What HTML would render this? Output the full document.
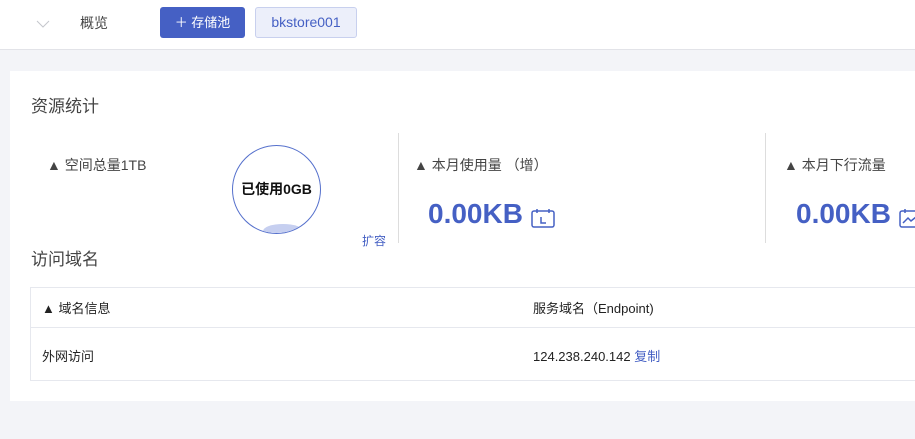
<!DOCTYPE html>
<html><head><meta charset="utf-8"><style>
*{margin:0;padding:0;box-sizing:border-box}
body{width:915px;height:439px;overflow:hidden;background:#f3f4f8;font-family:"Liberation Sans","Noto Sans CJK SC",sans-serif;position:relative;color:#333}
.a{position:absolute;white-space:nowrap}
</style></head><body>
<div class="a" style="left:0;top:0;width:915px;height:50px;background:#fff;border-bottom:1px solid #e2e3e8"></div>
<svg class="a" style="left:36px;top:19px" width="14" height="10"><path d="M1 2 L7 8 L13 2" fill="none" stroke="#c4c6cc" stroke-width="1"/></svg>
<div class="a" style="left:80px;top:13px;font-size:14px;color:#444">概览</div>
<div class="a" style="left:160px;top:7px;width:85px;height:31px;background:#4560c4;border-radius:3px;color:#fff;font-size:13px;line-height:31px;text-align:center">＋ 存储池</div>
<div class="a" style="left:255px;top:7px;width:102px;height:31px;background:#eceffa;border:1px solid #c8d0ee;border-radius:3px;color:#4560c4;font-size:14px;line-height:29px;text-align:center">bkstore001</div>

<div class="a" style="left:10px;top:71px;width:905px;height:330px;background:#fff"></div>
<div class="a" style="left:31px;top:92px;font-size:17px;color:#444">资源统计</div>
<div class="a" style="left:47px;top:155px;font-size:14px;color:#444">▲ 空间总量1TB</div>
<div class="a" style="left:232px;top:145px;width:89px;height:89px;border:1px solid #5570cc;border-radius:50%;overflow:hidden">
<div style="position:absolute;left:30px;top:78px;width:40px;height:14px;background:#c6cff0;border-radius:50%"></div>
<div style="position:absolute;left:0;top:33px;width:87px;text-align:center;font-size:14px;color:#111;font-weight:bold">已使用0GB</div></div>
<div class="a" style="left:362px;top:232px;font-size:12px;color:#4560c4">扩容</div>
<div class="a" style="left:398px;top:133px;width:1px;height:110px;background:#ddd"></div>
<div class="a" style="left:765px;top:133px;width:1px;height:110px;background:#ddd"></div>
<div class="a" style="left:414px;top:155px;font-size:14px;color:#444">▲ 本月使用量 （增）</div>
<div class="a" style="left:784px;top:155px;font-size:14px;color:#444">▲ 本月下行流量</div>
<div class="a" style="left:428px;top:198px;font-size:28px;font-weight:bold;color:#4560c4">0.00KB</div>
<div class="a" style="left:796px;top:198px;font-size:28px;font-weight:bold;color:#4560c4">0.00KB</div>
<svg class="a" style="left:531px;top:208px" width="24" height="20"><rect x="1" y="3" width="22" height="16" rx="2" fill="none" stroke="#4560c4" stroke-width="1.5"/><path d="M6 1v4M18 1v4M10 9v6h5" fill="none" stroke="#4560c4" stroke-width="1.5"/></svg>
<svg class="a" style="left:899px;top:208px" width="24" height="20"><rect x="1" y="3" width="22" height="16" rx="2" fill="none" stroke="#4560c4" stroke-width="1.5"/><path d="M6 1v4M4 15l5-5 3 3 5-4" fill="none" stroke="#4560c4" stroke-width="1.5"/></svg>
<div class="a" style="left:31px;top:245px;font-size:17px;color:#444">访问域名</div>
<div class="a" style="left:30px;top:287px;width:890px;height:94px;border:1px solid #e6e8ee"></div>
<div class="a" style="left:30px;top:327px;width:890px;height:1px;background:#e6e8ee"></div>
<div class="a" style="left:42px;top:298px;font-size:13px;color:#222">▲ 域名信息</div>
<div class="a" style="left:533px;top:298px;font-size:13px;color:#222">服务域名（Endpoint)</div>
<div class="a" style="left:42px;top:346px;font-size:13px;color:#222">外网访问</div>
<div class="a" style="left:533px;top:346px;font-size:13px;color:#222">124.238.240.142 <span style="color:#4560c4">复制</span></div>
</body></html>
